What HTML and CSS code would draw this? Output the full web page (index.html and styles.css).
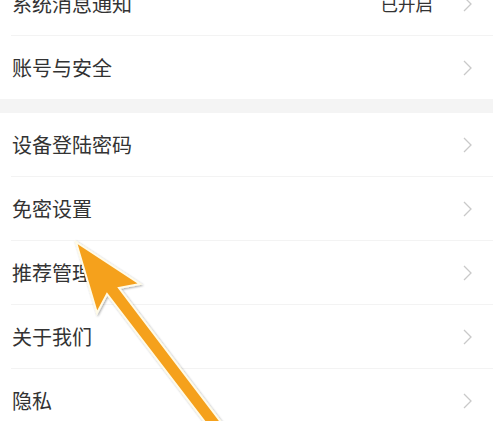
FILE: index.html
```html
<!DOCTYPE html>
<html lang="zh">
<head>
<meta charset="utf-8">
<link rel="stylesheet" href="styles.css">
</head>
<body>
<div class="page">
  <div class="group group-first">
    <div class="row"><span class="label">系统消息通知</span><span class="value">已开启</span><svg class="chev" viewBox="0 0 9 16"><polyline points="1,1 8,8 1,15"/></svg></div>
    <div class="row"><span class="label">账号与安全</span><svg class="chev" viewBox="0 0 9 16"><polyline points="1,1 8,8 1,15"/></svg></div>
  </div>
  <div class="gap"></div>
  <div class="group">
    <div class="row"><span class="label">设备登陆密码</span><svg class="chev" viewBox="0 0 9 16"><polyline points="1,1 8,8 1,15"/></svg></div>
    <div class="row"><span class="label">免密设置</span><svg class="chev" viewBox="0 0 9 16"><polyline points="1,1 8,8 1,15"/></svg></div>
    <div class="row"><span class="label">推荐管理</span><svg class="chev" viewBox="0 0 9 16"><polyline points="1,1 8,8 1,15"/></svg></div>
    <div class="row"><span class="label">关于我们</span><svg class="chev" viewBox="0 0 9 16"><polyline points="1,1 8,8 1,15"/></svg></div>
    <div class="row"><span class="label">隐私</span><svg class="chev" viewBox="0 0 9 16"><polyline points="1,1 8,8 1,15"/></svg></div>
  </div>
  <svg class="arrow" viewBox="0 0 493 421" width="493" height="421">
    <defs>
      <filter id="sh" x="-20%" y="-20%" width="140%" height="140%">
        <feDropShadow dx="1" dy="1" stdDeviation="1.2" flood-color="#000" flood-opacity="0.35"/>
      </filter>
    </defs>
    <polygon filter="url(#sh)" points="76,242 140,284 119,288 227,430 211,430 107,294 97,313" fill="#F5A11E" stroke="#fffbe8" stroke-width="2" stroke-linejoin="miter"/>
  </svg>
</div>
</body>
</html>
```
FILE: styles.css
```css
html, body {
  margin: 0;
  padding: 0;
  background: #ffffff;
  overflow: hidden;
}
.page {
  position: relative;
  width: 493px;
  height: 421px;
  overflow: hidden;
  font-family: "Noto Sans CJK SC", "Noto Sans", sans-serif;
  color: #333333;
}
.group {
  background: #ffffff;
  padding-left: 11px;
}
.group-first {
  margin-top: -28px;
}
.row {
  height: 63px;
  border-bottom: 1px solid #f3f3f3;
  display: flex;
  align-items: center;
  padding-left: 1px;
  padding-right: 21px;
}
.group-first .row:last-child {
  border-bottom: none;
  height: 63px;
}
.label {
  flex: 1;
  font-size: 20px;
  line-height: 1;
}
.value {
  font-size: 17.5px;
  color: #333333;
  margin-right: 30px;
  line-height: 1;
}
.chev {
  width: 9px;
  height: 16px;
  fill: none;
  stroke: #c9c9c9;
  stroke-width: 1.3;
}
.gap {
  height: 14px;
  background: #f4f4f4;
}
.arrow {
  position: absolute;
  left: 0;
  top: 0;
}
```
